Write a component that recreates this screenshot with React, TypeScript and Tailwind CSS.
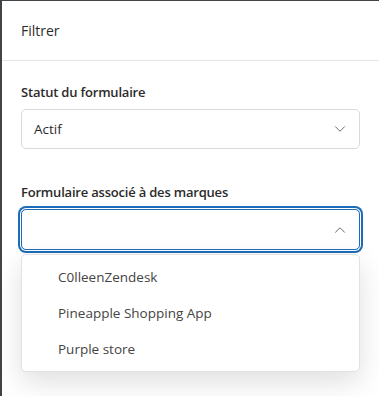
import { ChevronDown, ChevronUp } from "lucide-react";

const brands = ["C0lleenZendesk", "Pineapple Shopping App", "Purple store"];

export default function App() {
  return (
    <div className="w-[379px] h-[396px] bg-white border-l-2 border-t border-[#3f4448] overflow-hidden font-['Open_Sans',sans-serif] text-[13.5px] text-[#2b2b2b]">
      <div className="h-[60px] flex items-center px-[19px] border-b border-[#e6e6e6]">
        <span className="font-medium text-[14px]">Filtrer</span>
      </div>

      <div className="px-[19px] pt-[21px]">
        <label className="block leading-5 font-semibold text-[13px] tracking-[-0.2px]">
          Statut du formulaire
        </label>
        <div className="mt-[7px] h-[40px] flex items-center justify-between rounded-[5px] border border-[#dadada] pl-3 pr-[10px]">
          <span>Actif</span>
          <ChevronDown size={18} strokeWidth={1.3} className="text-[#666]" />
        </div>

        <label className="block mt-[33px] leading-5 font-semibold text-[13px] tracking-[-0.2px]">
          Formulaire associé à des marques
        </label>
        <div className="mt-[7px] h-[41px] flex items-center justify-end rounded-[5px] border border-[#1c6cb7] ring-2 ring-[#1c6cb7] ring-offset-1 pr-[10px]">
          <ChevronUp size={18} strokeWidth={1.3} className="text-[#666]" />
        </div>

        <ul className="mt-[4px] py-1 rounded-[5px] border border-[#e2e2e2] bg-white shadow-[0_10px_28px_rgba(0,0,0,0.13)] text-[#444]">
          {brands.map((b) => (
            <li key={b} className="h-[36px] flex items-center pl-[36px]">
              {b}
            </li>
          ))}
        </ul>
      </div>
    </div>
  );
}
